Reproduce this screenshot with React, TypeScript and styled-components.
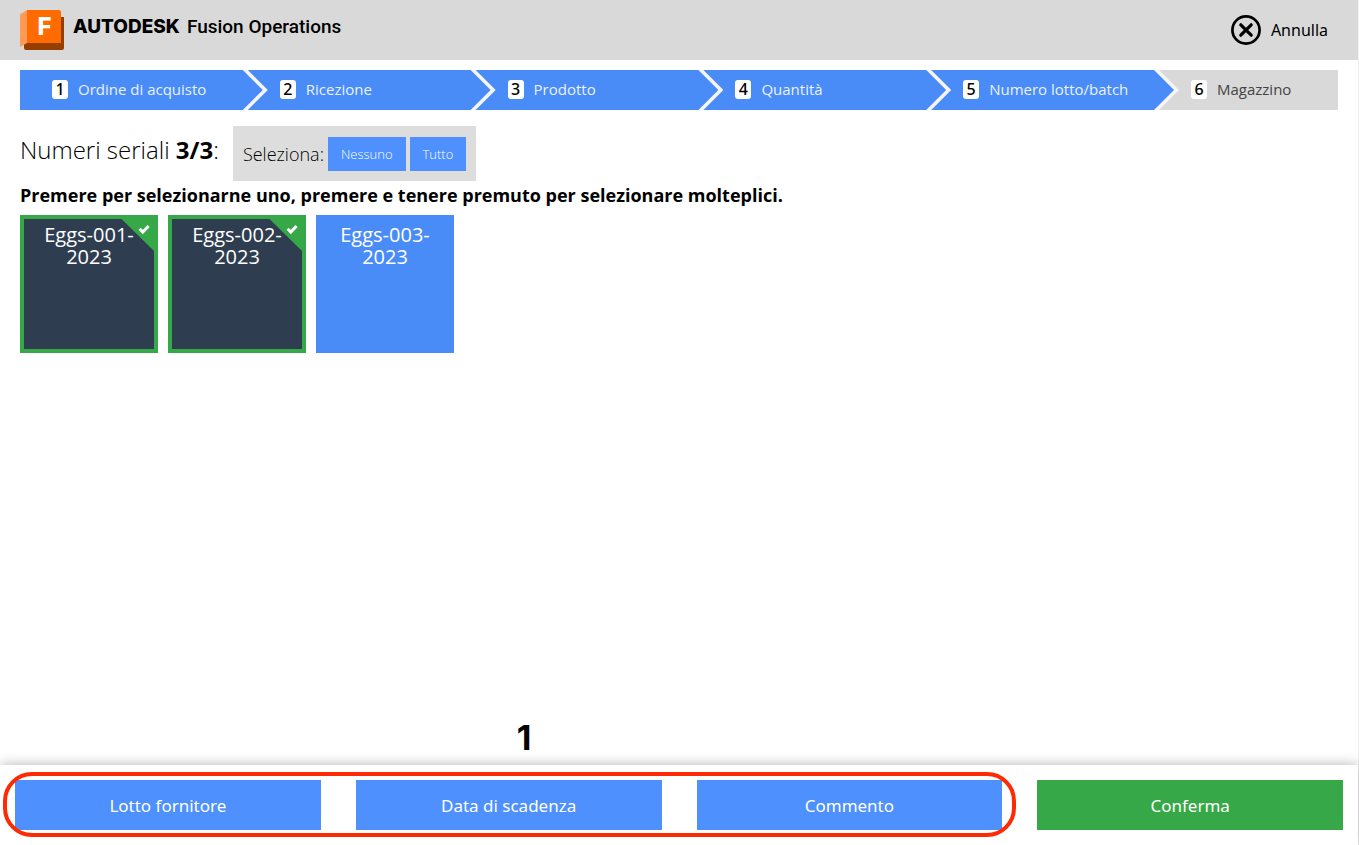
import React, { useState } from "react";
import styled, { createGlobalStyle } from "styled-components";

const BLUE = "#4a8cf7";
const BUTTON_BLUE = "#4d90fe";
const GREEN = "#37a847";
const GREY = "#d9d9d9";

const GlobalStyle = createGlobalStyle`
  *, *::before, *::after { box-sizing: border-box; }
  body {
    margin: 0;
    background: #fff;
    color: #000;
    font-family: "Open Sans", "Noto Sans", sans-serif;
  }
  button { font-family: inherit; border: 0; margin: 0; cursor: pointer; }
`;

const Page = styled.div`
  display: flex;
  flex-direction: column;
  min-height: 100vh;
  border-right: 1px solid #f0f0f0;
`;

const Header = styled.header`
  display: flex;
  align-items: center;
  justify-content: space-between;
  height: 60px;
  padding: 0 30px 0 20px;
  background: ${GREY};
`;

const Brand = styled.div`
  display: flex;
  align-items: center;
  gap: 9px;
`;

const BrandName = styled.h1`
  display: flex;
  align-items: baseline;
  gap: 7px;
  margin: 0;
  padding-bottom: 6px;
  font: 500 19px/24px Roboto, sans-serif;
`;

const Maker = styled.strong`
  font: 800 19px/24px Inter, sans-serif;
`;

const CancelButton = styled.button`
  display: flex;
  align-items: center;
  gap: 10px;
  padding: 0;
  background: none;
  color: #000;
  font: 400 16px/24px "Noto Sans", sans-serif;
`;

const Main = styled.main`
  flex: 1;
  padding: 10px 20px;
`;

const Steps = styled.ol`
  display: flex;
  height: 40px;
  margin: 0;
  padding: 0;
  list-style: none;
`;

const Step = styled.li<{ $done: boolean }>`
  position: relative;
  display: flex;
  align-items: center;
  flex: ${(p) => (p.$done ? "1 1 0" : "0 0 179px")};
  gap: 10px;
  padding: 0 0 2px 32px;
  background: ${(p) => (p.$done ? BLUE : GREY)};
  color: ${(p) => (p.$done ? "#e9f1ff" : "#444")};
  font-size: 15px;
  line-height: 20px;

  &::before,
  &::after {
    content: ${(p) => (p.$done ? '""' : "none")};
    position: absolute;
    z-index: 1;
    top: 0;
    left: calc(100% - 5px);
    width: 25px;
    height: 100%;
  }
  &::before {
    background: #f6f6f8;
    clip-path: polygon(0 0, 5px 0, 100% 50%, 5px 100%, 0 100%);
  }
  &::after {
    left: calc(100% - 8px);
    background: ${BLUE};
    clip-path: polygon(0 0, 3px 0, 23px 50%, 3px 100%, 0 100%);
  }
`;

const StepNumber = styled.span`
  width: 16px;
  height: 19px;
  border-radius: 3px;
  background: #fff;
  color: #000;
  font: 500 16px/19px "Noto Sans", sans-serif;
  text-align: center;
`;

const Toolbar = styled.div`
  display: flex;
  align-items: flex-start;
  gap: 14px;
  margin-top: 16px;
`;

const Title = styled.h2`
  margin: 0;
  padding-top: 6px;
  font-size: 24px;
  font-weight: 300;
  line-height: 36px;

  b { font-weight: 700; }
`;

const SelectBox = styled.div`
  display: flex;
  align-items: center;
  gap: 4px;
  height: 55px;
  padding: 0 10px;
  background: #ddd;
  font-size: 18px;
  font-weight: 300;
`;

const SmallButton = styled.button`
  height: 34px;
  padding: 0 13px;
  background: ${BUTTON_BLUE};
  color: #fff;
  font-size: 13px;
  font-weight: 300;
`;

const Hint = styled.p`
  margin: 2px 0 8px;
  font-size: 18px;
  font-weight: 700;
  line-height: 24px;
`;

const Tiles = styled.div`
  display: flex;
  flex-wrap: wrap;
  gap: 10px;
`;

const Tile = styled.button<{ $selected: boolean }>`
  position: relative;
  display: flex;
  justify-content: center;
  align-items: flex-start;
  width: 138px;
  height: 138px;
  padding: 5px 14px;
  border: 4px solid ${(p) => (p.$selected ? GREEN : BLUE)};
  background: ${(p) => (p.$selected ? "#2e3e50" : BLUE)};
  color: #fff;
  font-size: 20px;
  line-height: 22px;
`;

const Corner = styled.svg`
  position: absolute;
  top: 0;
  right: 0;
`;

const Footer = styled.footer`
  display: grid;
  grid-template-columns: repeat(4, 1fr);
  column-gap: 35px;
  padding: 15px;
  background: #fff;
  box-shadow: 0 0 12px rgba(0, 0, 0, 0.3);
`;

const Callout = styled.div`
  position: relative;
  display: grid;
  grid-column: span 3;
  grid-template-columns: subgrid;

  &::after {
    content: "";
    position: absolute;
    inset: -8px -14px -7px -12px;
    border: 4px solid #fe2a04;
    border-radius: 29px;
    pointer-events: none;
  }
`;

const CalloutNumber = styled.span`
  position: absolute;
  bottom: 72px;
  left: 50%;
  padding-left: 8px;
  font: 700 34px/40px Inter, sans-serif;
`;

const ActionButton = styled.button<{ $confirm?: boolean }>`
  height: 50px;
  background: ${(p) => (p.$confirm ? GREEN : BUTTON_BLUE)};
  color: #fff;
  font-size: 17px;
  font-family: "Noto Sans", sans-serif;
`;

const Logo = () => (
  <svg width="44" height="40" viewBox="0 0 44 40" aria-hidden="true">
    <path d="M4 33H41V7H44V38Q44 40 42 40H6Q4 40 4 38Z" fill="#943f00" />
    <path d="M0 4.5L7 0V33L0 37Z" fill="#ff9a55" />
    <path d="M7 0H39Q41 0 41 2V33H7Z" fill="#ff6b00" />
    <text x="24.5" y="25" textAnchor="middle" fill="#fff" fontFamily="Inter, sans-serif" fontSize="24" fontWeight="800">F</text>
  </svg>
);

const CancelIcon = () => (
  <svg width="30" height="30" viewBox="0 0 30 30" fill="none" stroke="#000" aria-hidden="true">
    <circle cx="15" cy="15" r="13.6" strokeWidth="2.7" />
    <path d="M9.8 9.8L20.2 20.2M20.2 9.8L9.8 20.2" strokeWidth="3.2" strokeLinecap="round" />
  </svg>
);

const SelectedCorner = () => (
  <Corner width="33" height="32" viewBox="0 0 33 32" aria-hidden="true">
    <path d="M0.5 0H33V32Z" fill={GREEN} />
    <path d="M18.6 9.8L21.8 13L27.6 7" fill="none" stroke="#fff" strokeWidth="3" />
  </Corner>
);

const STEPS = ["Ordine di acquisto", "Ricezione", "Prodotto", "Quantità", "Numero lotto/batch", "Magazzino"];
const SERIALS = ["Eggs-001-2023", "Eggs-002-2023", "Eggs-003-2023"];

export default function App() {
  const [selected, setSelected] = useState<string[]>(SERIALS.slice(0, 2));
  const toggle = (serial: string) =>
    setSelected((now) => (now.includes(serial) ? now.filter((s) => s !== serial) : [...now, serial]));

  return (
    <Page>
      <GlobalStyle />
      <Header>
        <Brand>
          <Logo />
          <BrandName>
            <Maker>AUTODESK</Maker>
            <span>Fusion Operations</span>
          </BrandName>
        </Brand>
        <CancelButton type="button">
          <CancelIcon />
          Annulla
        </CancelButton>
      </Header>
      <Main>
        <Steps>
          {STEPS.map((name, i) => (
            <Step key={name} $done={i < 5}>
              <StepNumber>{i + 1}</StepNumber>
              <span>{name}</span>
            </Step>
          ))}
        </Steps>
        <Toolbar>
          <Title>
            Numeri seriali <b>3/3</b>:
          </Title>
          <SelectBox>
            <span>Seleziona:</span>
            <SmallButton type="button" onClick={() => setSelected([])}>Nessuno</SmallButton>
            <SmallButton type="button" onClick={() => setSelected(SERIALS)}>Tutto</SmallButton>
          </SelectBox>
        </Toolbar>
        <Hint>Premere per selezionarne uno, premere e tenere premuto per selezionare molteplici.</Hint>
        <Tiles>
          {SERIALS.map((serial) => {
            const on = selected.includes(serial);
            return (
              <Tile key={serial} type="button" $selected={on} aria-pressed={on} onClick={() => toggle(serial)}>
                {serial}
                {on && <SelectedCorner />}
              </Tile>
            );
          })}
        </Tiles>
      </Main>
      <Footer>
        <Callout>
          <CalloutNumber>1</CalloutNumber>
          <ActionButton type="button">Lotto fornitore</ActionButton>
          <ActionButton type="button">Data di scadenza</ActionButton>
          <ActionButton type="button">Commento</ActionButton>
        </Callout>
        <ActionButton type="button" $confirm>Conferma</ActionButton>
      </Footer>
    </Page>
  );
}
